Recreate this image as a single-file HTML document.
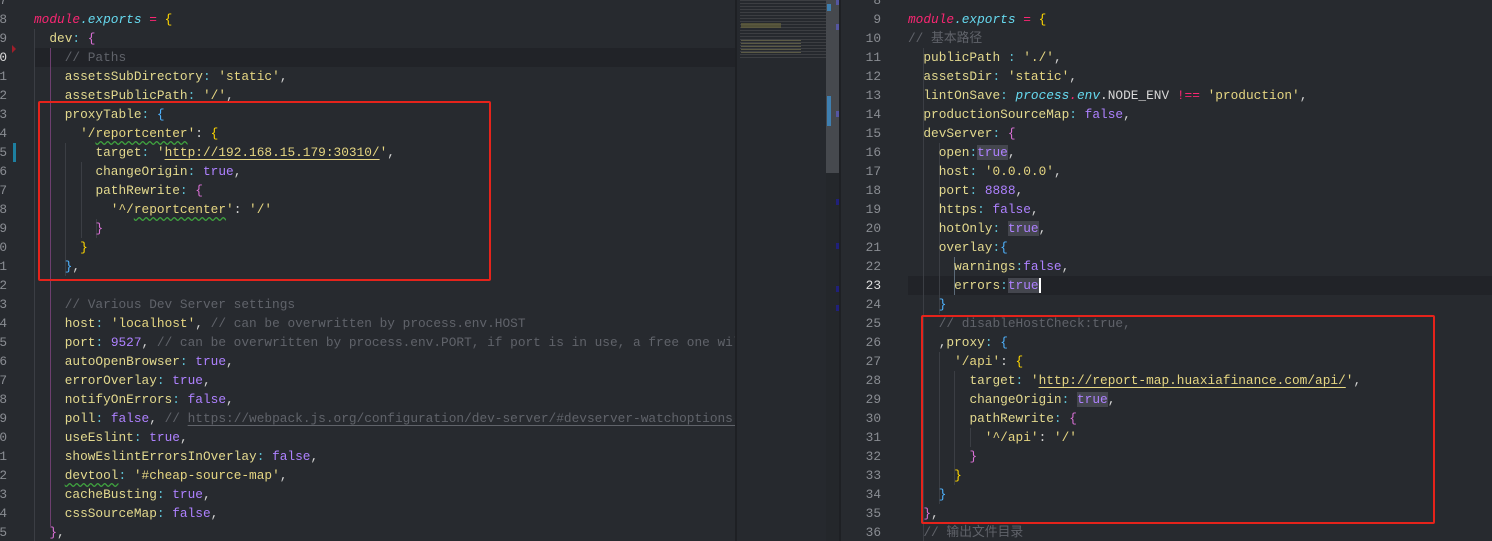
<!DOCTYPE html>
<html><head><meta charset="utf-8"><style>
html,body{margin:0;padding:0;width:1492px;height:541px;overflow:hidden;background:#272a2f;}
.pane{position:absolute;top:0;height:541px;overflow:hidden;background:#272a2f;}
.l{position:absolute;left:0;height:19px;line-height:19px;white-space:pre;font-family:"Liberation Mono","Noto Sans CJK SC",monospace;font-size:12.8px;color:#d4d4d4;}
.n{position:absolute;height:19px;line-height:19px;font-family:"Liberation Mono",monospace;font-size:12.8px;color:#8a8d93;text-align:right;}
.k{color:#e3d98e}.s{color:#e6d682}.p{color:#5fc2d4}.b{color:#ae81ff}.c{color:#60636a}
.m{color:#f92672;font-style:italic}.e{color:#66d9ef;font-style:italic}.w{color:#d8d8d8}
.y{color:#ffd700}.bl{color:#4fb3ff}.pk{color:#da70d6}
.u{text-decoration:underline;text-decoration-color:#e6d682;text-underline-offset:3px}
.sq{text-decoration:underline wavy #3fa33f;text-underline-offset:3px}
.hl{background:#44464e}
.g{position:absolute;width:1px;background:#3b3e44;}
.box{position:absolute;border:2px solid #e5231b;border-radius:2px;}
</style></head><body>
<!-- left pane -->
<div class="pane" style="left:0;width:735px;">
  <div style="position:absolute;left:34px;top:48px;width:701px;height:19px;background:#212328"></div>
  <div class="g" style="left:34px;top:29px;height:512px"></div>
  <div class="g" style="left:50px;top:48px;height:478px;background:#6d3f6f"></div>
  <div class="g" style="left:65px;top:143px;height:133px"></div>
  <div class="g" style="left:81px;top:162px;height:76px"></div>
  <div class="g" style="left:96px;top:219px;height:19px"></div>
  <div style="position:absolute;left:0;top:0;width:8px;height:541px;overflow:hidden">
    <div class="n" style="left:-30px;width:37px;top:-9px">7</div>
    <div class="n" style="left:-30px;width:37px;top:10px">8</div>
    <div class="n" style="left:-30px;width:37px;top:29px">9</div>
    <div class="n" style="left:-30px;width:37px;top:48px;color:#ddd">10</div>
    <div class="n" style="left:-30px;width:37px;top:67px">11</div>
    <div class="n" style="left:-30px;width:37px;top:86px">12</div>
    <div class="n" style="left:-30px;width:37px;top:105px">13</div>
    <div class="n" style="left:-30px;width:37px;top:124px">14</div>
    <div class="n" style="left:-30px;width:37px;top:143px">15</div>
    <div class="n" style="left:-30px;width:37px;top:162px">16</div>
    <div class="n" style="left:-30px;width:37px;top:181px">17</div>
    <div class="n" style="left:-30px;width:37px;top:200px">18</div>
    <div class="n" style="left:-30px;width:37px;top:219px">19</div>
    <div class="n" style="left:-30px;width:37px;top:238px">20</div>
    <div class="n" style="left:-30px;width:37px;top:257px">21</div>
    <div class="n" style="left:-30px;width:37px;top:276px">22</div>
    <div class="n" style="left:-30px;width:37px;top:295px">23</div>
    <div class="n" style="left:-30px;width:37px;top:314px">24</div>
    <div class="n" style="left:-30px;width:37px;top:333px">25</div>
    <div class="n" style="left:-30px;width:37px;top:352px">26</div>
    <div class="n" style="left:-30px;width:37px;top:371px">27</div>
    <div class="n" style="left:-30px;width:37px;top:390px">28</div>
    <div class="n" style="left:-30px;width:37px;top:409px">29</div>
    <div class="n" style="left:-30px;width:37px;top:428px">30</div>
    <div class="n" style="left:-30px;width:37px;top:447px">31</div>
    <div class="n" style="left:-30px;width:37px;top:466px">32</div>
    <div class="n" style="left:-30px;width:37px;top:485px">33</div>
    <div class="n" style="left:-30px;width:37px;top:504px">34</div>
    <div class="n" style="left:-30px;width:37px;top:523px">35</div>
  </div>
  <div style="position:absolute;left:13px;top:143px;width:3px;height:19px;background:#1d7fa0"></div>
  <div style="position:absolute;left:12px;top:45px;width:0;height:0;border-left:4px solid #a01e2a;border-top:4px solid transparent;border-bottom:4px solid transparent"></div>
  <div style="position:absolute;left:34px;top:0;width:701px;height:541px">
    <div class="l" style="top:10px"><span class="m">module</span><span class="e">.exports</span> <span class="m" style="font-style:normal">=</span> <span class="y">{</span></div>
    <div class="l" style="top:29px">  <span class="k">dev</span><span class="p">:</span> <span class="pk">{</span></div>
    <div class="l" style="top:48px">    <span class="c">// Paths</span></div>
    <div class="l" style="top:67px">    <span class="k">assetsSubDirectory</span><span class="p">:</span> <span class="s">'static'</span>,</div>
    <div class="l" style="top:86px">    <span class="k">assetsPublicPath</span><span class="p">:</span> <span class="s">'/'</span>,</div>
    <div class="l" style="top:105px">    <span class="k">proxyTable</span><span class="p">:</span> <span class="bl">{</span></div>
    <div class="l" style="top:124px">      <span class="s">'/<span class="sq">reportcenter</span>'</span>: <span class="y">{</span></div>
    <div class="l" style="top:143px">        <span class="k">target</span><span class="p">:</span> <span class="s">'<span class="u">http://192.168.15.179:30310/</span>'</span>,</div>
    <div class="l" style="top:162px">        <span class="k">changeOrigin</span><span class="p">:</span> <span class="b">true</span>,</div>
    <div class="l" style="top:181px">        <span class="k">pathRewrite</span><span class="p">:</span> <span class="pk">{</span></div>
    <div class="l" style="top:200px">          <span class="s">'^/<span class="sq">reportcenter</span>'</span>: <span class="s">'/'</span></div>
    <div class="l" style="top:219px">        <span class="pk">}</span></div>
    <div class="l" style="top:238px">      <span class="y">}</span></div>
    <div class="l" style="top:257px">    <span class="bl">}</span>,</div>
    <div class="l" style="top:295px">    <span class="c">// Various Dev Server settings</span></div>
    <div class="l" style="top:314px">    <span class="k">host</span><span class="p">:</span> <span class="s">'localhost'</span>, <span class="c">// can be overwritten by process.env.HOST</span></div>
    <div class="l" style="top:333px">    <span class="k">port</span><span class="p">:</span> <span class="b">9527</span>, <span class="c">// can be overwritten by process.env.PORT, if port is in use, a free one will be determined</span></div>
    <div class="l" style="top:352px">    <span class="k">autoOpenBrowser</span><span class="p">:</span> <span class="b">true</span>,</div>
    <div class="l" style="top:371px">    <span class="k">errorOverlay</span><span class="p">:</span> <span class="b">true</span>,</div>
    <div class="l" style="top:390px">    <span class="k">notifyOnErrors</span><span class="p">:</span> <span class="b">false</span>,</div>
    <div class="l" style="top:409px">    <span class="k">poll</span><span class="p">:</span> <span class="b">false</span>, <span class="c">// <span style="text-decoration:underline;text-underline-offset:3px">https://webpack.js.org/configuration/dev-server/#devserver-watchoptions-</span></span></div>
    <div class="l" style="top:428px">    <span class="k">useEslint</span><span class="p">:</span> <span class="b">true</span>,</div>
    <div class="l" style="top:447px">    <span class="k">showEslintErrorsInOverlay</span><span class="p">:</span> <span class="b">false</span>,</div>
    <div class="l" style="top:466px">    <span class="k sq">devtool</span><span class="p">:</span> <span class="s">'#cheap-source-map'</span>,</div>
    <div class="l" style="top:485px">    <span class="k">cacheBusting</span><span class="p">:</span> <span class="b">true</span>,</div>
    <div class="l" style="top:504px">    <span class="k">cssSourceMap</span><span class="p">:</span> <span class="b">false</span>,</div>
    <div class="l" style="top:523px">  <span class="pk">}</span>,</div>
  </div>
  <div class="box" style="left:38px;top:101px;width:449px;height:176px"></div>
</div>
<!-- divider/minimap -->
<div style="position:absolute;left:735px;top:0;width:2px;height:541px;background:#1e2024"></div>
<div style="position:absolute;left:737px;top:0;width:89px;height:541px;background:#26292e">
  <div style="position:absolute;left:3px;top:0;width:88px;height:60px;background:repeating-linear-gradient(#4a4c50 0 1px,transparent 1px 3px);opacity:.6"></div>
  <div style="position:absolute;left:4px;top:23px;width:40px;height:5px;background:#6e6a3e;opacity:.6"></div>
  <div style="position:absolute;left:4px;top:40px;width:60px;height:14px;background:repeating-linear-gradient(#5b5a45 0 1px,transparent 1px 3px)"></div>
</div>
<div style="position:absolute;left:826px;top:0;width:14px;height:541px;background:#24272b"></div>
<div style="position:absolute;left:826px;top:0;width:14px;height:173px;background:#46494e"></div>
<div style="position:absolute;left:827px;top:4px;width:4px;height:7px;background:#3e7fb0"></div>
<div style="position:absolute;left:827px;top:96px;width:4px;height:30px;background:#3e7fb0"></div>
<div style="position:absolute;left:836px;top:0;width:4px;height:5px;background:#5556a0"></div>
<div style="position:absolute;left:836px;top:24px;width:4px;height:6px;background:#5556a0"></div>
<div style="position:absolute;left:836px;top:111px;width:4px;height:6px;background:#5556a0"></div>
<div style="position:absolute;left:836px;top:199px;width:4px;height:6px;background:#20207a"></div>
<div style="position:absolute;left:836px;top:243px;width:4px;height:6px;background:#20207a"></div>
<div style="position:absolute;left:836px;top:286px;width:4px;height:6px;background:#20207a"></div>
<div style="position:absolute;left:836px;top:305px;width:4px;height:6px;background:#20207a"></div>
<div style="position:absolute;left:839px;top:0;width:2px;height:541px;background:#1e2024"></div>
<!-- right pane -->
<div class="pane" style="left:841px;width:651px;">
  <div style="position:absolute;left:67px;top:276px;width:584px;height:19px;background:#212328"></div>
  <div class="g" style="left:82px;top:48px;height:493px"></div>
  <div class="g" style="left:98px;top:143px;height:171px"></div>
  <div class="g" style="left:113px;top:257px;height:38px;background:#5b6a78"></div>
  <div class="g" style="left:98px;top:352px;height:152px"></div>
  <div class="g" style="left:113px;top:371px;height:114px"></div>
  <div class="g" style="left:129px;top:428px;height:19px"></div>
  <div class="n" style="left:0;width:40px;top:-9px">8</div>
  <div class="n" style="left:0;width:40px;top:10px">9</div>
  <div class="n" style="left:0;width:40px;top:29px">10</div>
  <div class="n" style="left:0;width:40px;top:48px">11</div>
  <div class="n" style="left:0;width:40px;top:67px">12</div>
  <div class="n" style="left:0;width:40px;top:86px">13</div>
  <div class="n" style="left:0;width:40px;top:105px">14</div>
  <div class="n" style="left:0;width:40px;top:124px">15</div>
  <div class="n" style="left:0;width:40px;top:143px">16</div>
  <div class="n" style="left:0;width:40px;top:162px">17</div>
  <div class="n" style="left:0;width:40px;top:181px">18</div>
  <div class="n" style="left:0;width:40px;top:200px">19</div>
  <div class="n" style="left:0;width:40px;top:219px">20</div>
  <div class="n" style="left:0;width:40px;top:238px">21</div>
  <div class="n" style="left:0;width:40px;top:257px">22</div>
  <div class="n" style="left:0;width:40px;top:276px;color:#ddd">23</div>
  <div class="n" style="left:0;width:40px;top:295px">24</div>
  <div class="n" style="left:0;width:40px;top:314px">25</div>
  <div class="n" style="left:0;width:40px;top:333px">26</div>
  <div class="n" style="left:0;width:40px;top:352px">27</div>
  <div class="n" style="left:0;width:40px;top:371px">28</div>
  <div class="n" style="left:0;width:40px;top:390px">29</div>
  <div class="n" style="left:0;width:40px;top:409px">30</div>
  <div class="n" style="left:0;width:40px;top:428px">31</div>
  <div class="n" style="left:0;width:40px;top:447px">32</div>
  <div class="n" style="left:0;width:40px;top:466px">33</div>
  <div class="n" style="left:0;width:40px;top:485px">34</div>
  <div class="n" style="left:0;width:40px;top:504px">35</div>
  <div class="n" style="left:0;width:40px;top:523px">36</div>
  <div style="position:absolute;left:67px;top:0;width:584px;height:541px">
    <div class="l" style="top:10px"><span class="m">module</span><span class="e">.exports</span> <span class="m" style="font-style:normal">=</span> <span class="y">{</span></div>
    <div class="l" style="top:29px"><span class="c">// 基本路径</span></div>
    <div class="l" style="top:48px">  <span class="k">publicPath</span> <span class="p">:</span> <span class="s">'./'</span>,</div>
    <div class="l" style="top:67px">  <span class="k">assetsDir</span><span class="p">:</span> <span class="s">'static'</span>,</div>
    <div class="l" style="top:86px">  <span class="k">lintOnSave</span><span class="p">:</span> <span class="e">process</span><span class="m">.</span><span class="e">env</span><span class="w">.NODE_ENV</span> <span class="m" style="font-style:normal">!==</span> <span class="s">'production'</span>,</div>
    <div class="l" style="top:105px">  <span class="k">productionSourceMap</span><span class="p">:</span> <span class="b">false</span>,</div>
    <div class="l" style="top:124px">  <span class="k">devServer</span><span class="p">:</span> <span class="pk">{</span></div>
    <div class="l" style="top:143px">    <span class="k">open</span><span class="p">:</span><span class="b hl">true</span>,</div>
    <div class="l" style="top:162px">    <span class="k">host</span><span class="p">:</span> <span class="s">'0.0.0.0'</span>,</div>
    <div class="l" style="top:181px">    <span class="k">port</span><span class="p">:</span> <span class="b">8888</span>,</div>
    <div class="l" style="top:200px">    <span class="k">https</span><span class="p">:</span> <span class="b">false</span>,</div>
    <div class="l" style="top:219px">    <span class="k">hotOnly</span><span class="p">:</span> <span class="b hl">true</span>,</div>
    <div class="l" style="top:238px">    <span class="k">overlay</span><span class="p">:</span><span class="bl">{</span></div>
    <div class="l" style="top:257px">      <span class="k">warnings</span><span class="p">:</span><span class="b">false</span>,</div>
    <div class="l" style="top:276px">      <span class="k">errors</span><span class="p">:</span><span class="b hl">true</span><span style="border-left:2px solid #fff"></span></div>
    <div class="l" style="top:295px">    <span class="bl">}</span></div>
    <div class="l" style="top:314px">    <span class="c">// disableHostCheck:true,</span></div>
    <div class="l" style="top:333px">    ,<span class="k">proxy</span><span class="p">:</span> <span class="bl">{</span></div>
    <div class="l" style="top:352px">      <span class="s">'/api'</span>: <span class="y">{</span></div>
    <div class="l" style="top:371px">        <span class="k">target</span><span class="p">:</span> <span class="s">'<span class="u">http://report-map.huaxiafinance.com/api/</span>'</span>,</div>
    <div class="l" style="top:390px">        <span class="k">changeOrigin</span><span class="p">:</span> <span class="b hl">true</span>,</div>
    <div class="l" style="top:409px">        <span class="k">pathRewrite</span><span class="p">:</span> <span class="pk">{</span></div>
    <div class="l" style="top:428px">          <span class="s">'^/api'</span>: <span class="s">'/'</span></div>
    <div class="l" style="top:447px">        <span class="pk">}</span></div>
    <div class="l" style="top:466px">      <span class="y">}</span></div>
    <div class="l" style="top:485px">    <span class="bl">}</span></div>
    <div class="l" style="top:504px">  <span class="pk">}</span>,</div>
    <div class="l" style="top:523px">  <span class="c">// 输出文件目录</span></div>
  </div>
  <div class="box" style="left:80px;top:315px;width:510px;height:205px"></div>
</div>
</body></html>
